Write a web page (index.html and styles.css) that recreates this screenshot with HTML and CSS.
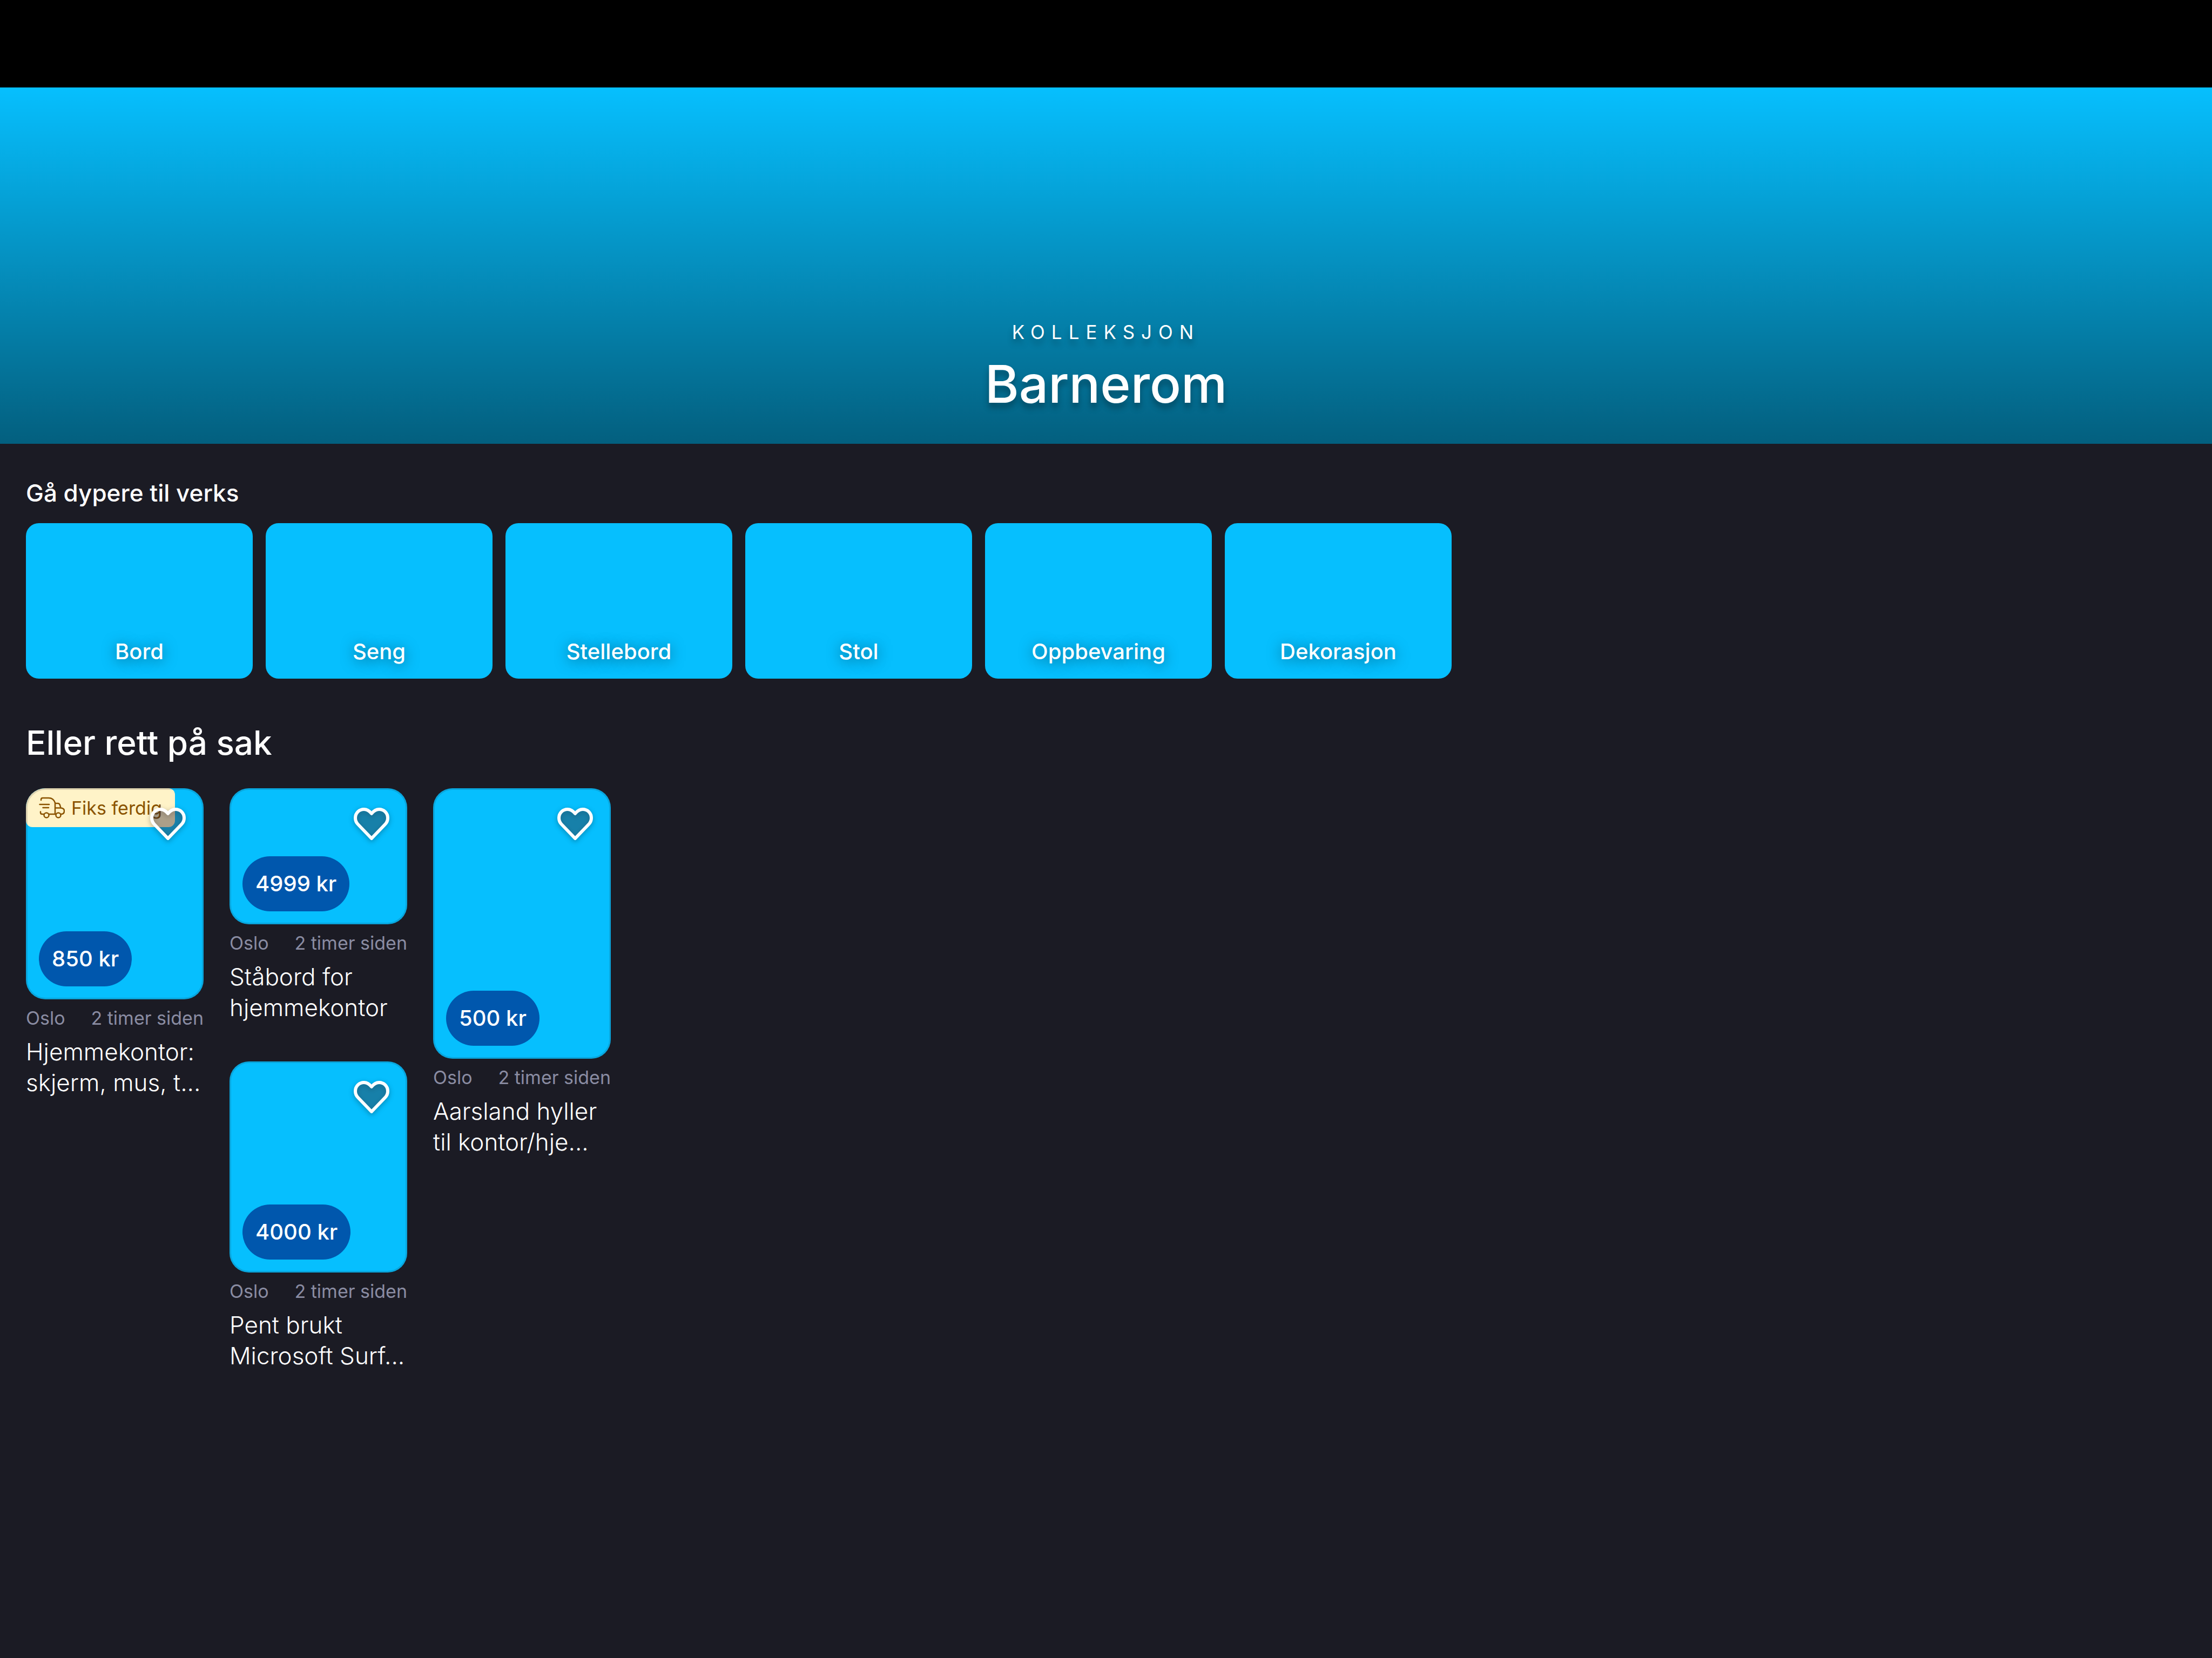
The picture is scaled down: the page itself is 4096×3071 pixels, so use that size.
FILE: index.html
```html
<!DOCTYPE html>
<html lang="nb">
<head>
<meta charset="utf-8">
<meta name="viewport" content="width=device-width, initial-scale=1">
<title>Barnerom</title>
<link rel="stylesheet" href="styles.css">
</head>
<body>
<svg class="sprite" aria-hidden="true">
  <symbol id="heart" viewBox="0 0 66 60">
    <path d="M33 11 C29 6 25 3 19 3 C10 3 3 10 3 19 C3 24 5 28 8 31 L33 57 L58 31 C61 28 63 24 63 19 C63 10 56 3 47 3 C41 3 37 6 33 11 Z"/>
  </symbol>
</svg>
<header class="hero">
  <p class="hero-kicker">KOLLEKSJON</p>
  <h1 class="hero-title">Barnerom</h1>
</header>
<main class="content">
  <section class="deeper">
    <h2 class="deeper-title">Gå dypere til verks</h2>
    <nav class="tiles">
      <a class="tile" href="#bord">Bord</a>
      <a class="tile" href="#seng">Seng</a>
      <a class="tile" href="#stellebord">Stellebord</a>
      <a class="tile" href="#stol">Stol</a>
      <a class="tile" href="#oppbevaring">Oppbevaring</a>
      <a class="tile" href="#dekorasjon">Dekorasjon</a>
    </nav>
  </section>
  <section class="ads">
    <h2 class="ads-title">Eller rett på sak</h2>
    <div class="columns">
      <div class="column">
        <article class="ad">
          <div class="photo photo-portrait">
            <span class="badge">
              <svg class="truck" viewBox="0 0 48 40" aria-hidden="true">
                <path d="M4 6 V5 Q4 2 7 2 H18 Q27 2 30 11 V32 M18.500 32 H31.500 M30 12 H35 Q38 12 39 15 L40.500 20.500 H30 M40.500 20.500 Q47 21 47 26 Q47 32 41 32 M3 27.500 V29 Q3 32 6 32 H9 M1.500 14 H19 M7.500 20 H18"/>
                <circle cx="14" cy="34" r="4.500"/>
                <circle cx="36" cy="34" r="4.500"/>
              </svg>
              Fiks ferdig
            </span>
            <button class="favorite" type="button" aria-label="Legg til favoritt"><svg class="heart"><use href="#heart"/></svg></button>
            <span class="price">850 kr</span>
          </div>
          <div class="meta"><span>Oslo</span><span>2 timer siden</span></div>
          <h3 class="ad-title">Hjemmekontor: skjerm, mus, t...</h3>
        </article>
      </div>
      <div class="column">
        <article class="ad">
          <div class="photo photo-landscape">
            <button class="favorite" type="button" aria-label="Legg til favoritt"><svg class="heart"><use href="#heart"/></svg></button>
            <span class="price">4999 kr</span>
          </div>
          <div class="meta"><span>Oslo</span><span>2 timer siden</span></div>
          <h3 class="ad-title">Ståbord for hjemmekontor</h3>
        </article>
        <article class="ad">
          <div class="photo photo-portrait">
            <button class="favorite" type="button" aria-label="Legg til favoritt"><svg class="heart"><use href="#heart"/></svg></button>
            <span class="price">4000 kr</span>
          </div>
          <div class="meta"><span>Oslo</span><span>2 timer siden</span></div>
          <h3 class="ad-title">Pent brukt Microsoft Surf...</h3>
        </article>
      </div>
      <div class="column">
        <article class="ad">
          <div class="photo photo-tall">
            <button class="favorite" type="button" aria-label="Legg til favoritt"><svg class="heart"><use href="#heart"/></svg></button>
            <span class="price">500 kr</span>
          </div>
          <div class="meta"><span>Oslo</span><span>2 timer siden</span></div>
          <h3 class="ad-title">Aarsland hyller til kontor/hje...</h3>
        </article>
      </div>
    </div>
  </section>
</main>
</body>
</html>
```
FILE: styles.css
```css
:root {
  --sky: #06bffe;
  --navy: #0057ad;
  --page: #1b1b24;
  --muted: #8a8ca2;
}

* { box-sizing: border-box; }

body {
  margin: 0;
  min-height: 100vh;
  border-top: 162px solid #000;
  background: var(--page);
  color: #fff;
  font-family: Inter, "Liberation Sans", sans-serif;
}

h1, h2, h3, p { margin: 0; font-weight: 500; }

.sprite { position: absolute; width: 0; height: 0; }

/* Hero */
.hero {
  display: flex;
  flex-direction: column;
  align-items: center;
  justify-content: flex-end;
  gap: 12px;
  height: 660px;
  padding-bottom: 51px;
  background: linear-gradient(rgba(0, 0, 0, 0), rgba(0, 0, 0, 0.5)), var(--sky);
}

.hero-kicker {
  font-size: 35px;
  line-height: 48px;
  font-weight: 400;
  letter-spacing: 12px;
  text-shadow: 0 9px 12px rgba(0, 0, 0, 0.3);
}

.hero-title {
  font-size: 96px;
  line-height: 120px;
  text-shadow: 0 9px 12px rgba(0, 0, 0, 0.3);
}

.content { padding: 60px 48px; }

/* Category tiles */
.deeper-title { font-size: 44px; line-height: 63px; }

.tiles { display: flex; gap: 24px; margin-top: 24px; }

.tile {
  display: flex;
  align-items: flex-end;
  justify-content: center;
  width: 420px;
  height: 288px;
  padding-bottom: 25px;
  border-radius: 24px;
  background: var(--sky);
  color: #fff;
  font-size: 40px;
  line-height: 51px;
  font-weight: 500;
  text-decoration: none;
  text-shadow: 0 3px 24px rgba(0, 0, 0, 0.5);
}

/* Ads */
.ads { margin-top: 77px; }

.ads-title { font-size: 62px; line-height: 84px; }

.columns { display: flex; align-items: flex-start; gap: 48px; margin-top: 42px; }

.column { display: flex; flex-direction: column; gap: 71px; width: 329px; }

.photo {
  position: relative;
  display: flex;
  align-items: flex-end;
  padding: 24px;
  overflow: hidden;
  border-radius: 36px;
  background: var(--sky);
}

.photo::after {
  content: "";
  position: absolute;
  inset: 0;
  border: 3px solid rgba(27, 27, 36, 0.15);
  border-radius: 36px;
  pointer-events: none;
}

.photo-landscape { height: 252px; }
.photo-portrait { height: 391px; }
.photo-tall { height: 501px; }

.badge {
  position: absolute;
  top: 0;
  left: 0;
  display: flex;
  align-items: center;
  gap: 12px;
  height: 72px;
  padding: 0 24px;
  border-radius: 12px;
  background: #fff3c8;
  color: #8a5300;
  font-size: 34px;
}

.truck {
  width: 48px;
  height: 40px;
  fill: none;
  stroke: currentColor;
  stroke-width: 2.5;
  stroke-linecap: round;
  stroke-linejoin: round;
}

.favorite {
  position: absolute;
  top: 24px;
  right: 24px;
  display: flex;
  align-items: center;
  justify-content: center;
  width: 84px;
  height: 84px;
  padding: 0;
  border: 0;
  background: none;
}

.heart {
  width: 66px;
  height: 60px;
  overflow: visible;
  fill: rgba(60, 45, 55, 0.34);
  stroke: #fff;
  stroke-width: 6;
  stroke-linejoin: round;
  filter: drop-shadow(0 3px 5px rgba(0, 0, 0, 0.3));
}

.price {
  padding: 24px;
  border-radius: 51px;
  background: var(--navy);
  font-size: 40px;
  line-height: 54px;
  font-weight: 500;
}

.meta {
  display: flex;
  justify-content: space-between;
  margin-top: 12px;
  color: var(--muted);
  font-size: 34px;
  line-height: 45px;
}

.ad-title {
  margin-top: 12px;
  font-size: 44px;
  line-height: 57px;
  font-weight: 300;
}
```
